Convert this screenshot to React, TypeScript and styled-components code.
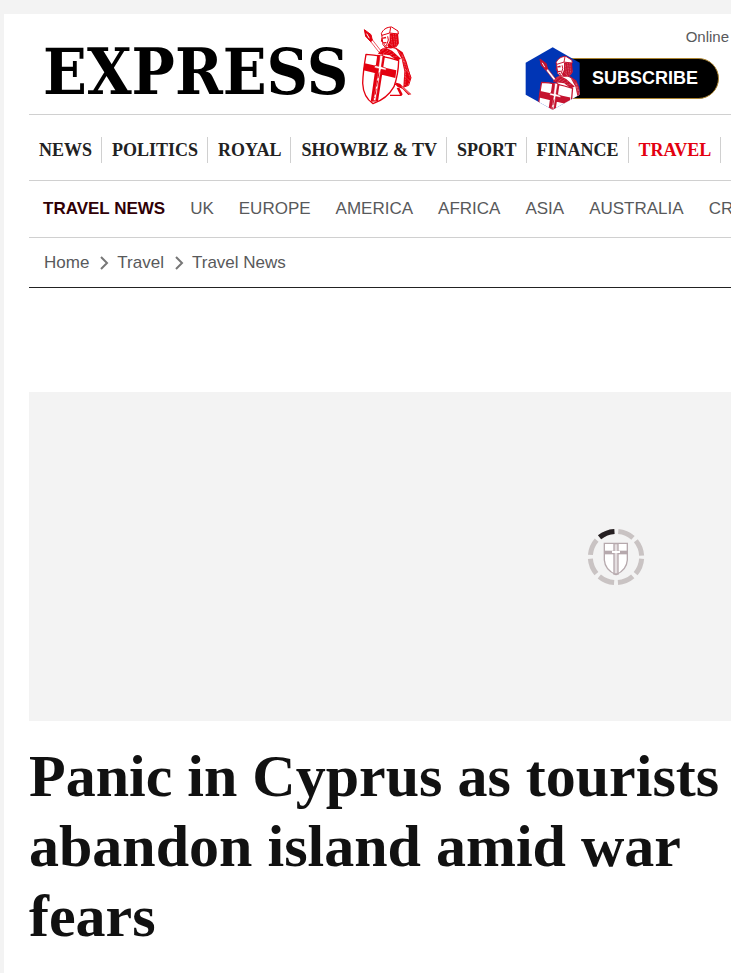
import React from "react";
import styled, { createGlobalStyle } from "styled-components";

const serif = '"Liberation Serif", "Times New Roman", serif';
const sans = '"Liberation Sans", Arial, sans-serif';

const GlobalStyle = createGlobalStyle`
  * { box-sizing: border-box; }
  body { margin: 0; background: #f3f3f3; font-family: ${sans}; }
  a { color: inherit; text-decoration: none; }
  ul, ol { list-style: none; margin: 0; padding: 0; }
`;

const Page = styled.div`
  margin: 14px 0 0 4px;
  padding-left: 25px;
  min-height: calc(100vh - 14px);
  background: #fff;
  overflow: hidden;
`;

const Masthead = styled.header`
  display: flex;
  justify-content: space-between;
  height: 101px;
  border-bottom: 1px solid #d0d0d0;
`;

const Brand = styled.a`
  display: flex;
  align-items: flex-start;
  gap: 14px;
  padding: 11px 0 0 14px;
`;

const Wordmark = styled.span`
  padding-top: 9px;
  color: #000;
  font: bold 64px/76px "DejaVu Serif Condensed", "DejaVu Serif", ${serif};
`;

const Actions = styled.div`
  display: flex;
  flex-direction: column;
  align-items: flex-end;
`;

const EditionLink = styled.a`
  padding: 14px 2px 0 0;
  color: #58595b;
  font-size: 15px;
  line-height: 18px;
`;

const SubscribeLink = styled.a`
  display: flex;
  align-items: center;
  margin-right: 12px;
`;

const BadgeDrawing = styled.svg`
  z-index: 1;
  width: 56px;
  height: 64px;
`;

const Pill = styled.span`
  display: flex;
  align-items: center;
  height: 41px;
  margin-left: -30px;
  padding: 0 20px 0 40px;
  border: 1px solid #ab8431;
  border-radius: 0 21px 21px 0;
  background: #000;
  color: #fff;
  font: bold 18px/24px ${sans};
`;

const MainNav = styled.ul`
  display: flex;
  align-items: center;
  height: 66px;
  padding-top: 4px;
  border-bottom: 1px solid #d0d0d0;
`;

const MainNavItem = styled.li<{ $active?: boolean }>`
  padding: 0 9px 0 10px;
  border-right: 1px solid #d0d0d0;
  color: ${(p) => (p.$active ? "#e3000f" : "#222")};
  font: bold 18px/26px ${serif};
  white-space: nowrap;
`;

const SubNav = styled.ul`
  display: flex;
  align-items: center;
  gap: 25px;
  height: 57px;
  padding-left: 14px;
  border-bottom: 1px solid #d0d0d0;
  overflow: hidden;
`;

const SubNavItem = styled.li<{ $active?: boolean }>`
  color: ${(p) => (p.$active ? "#300006" : "#58595b")};
  font-size: 17px;
  font-weight: ${(p) => (p.$active ? "bold" : "normal")};
  line-height: 20px;
  white-space: nowrap;
`;

const Breadcrumbs = styled.ol`
  display: flex;
  align-items: center;
  height: 50px;
  padding-left: 15px;
  border-bottom: 1px solid #222;
`;

const Crumb = styled.li`
  display: flex;
  align-items: center;
  color: #58595b;
  font-size: 17px;
  line-height: 20px;
`;

const Chevron = styled.svg`
  width: 9px;
  height: 14px;
  margin: 0 8px 0 11px;
`;

const VideoSlot = styled.div`
  display: flex;
  align-items: center;
  justify-content: flex-end;
  height: 329px;
  margin-top: 104px;
  padding-right: 86px;
  background: #f3f3f3;
`;

const Headline = styled.h1`
  margin: 20px 0 0;
  color: #111;
  font: bold 60px/70px ${serif};
`;

function CrusaderFigure({ color }: { color: string }) {
  return (
    <g stroke={color} strokeLinejoin="round" fill="#fff" strokeWidth="3">
      <path d="M56 72 88 113 94 109 62 68Z" strokeWidth="2" />
      <path d="M43 44 47 64 62 80 67 76 63 59Z" fill={color} />
      <path d="M50 56 58 70" stroke="#fff" strokeWidth="3" />
      <path d="M92 105C114 90 145 94 160 126L183 188 176 211 154 219 126 202Z" />
      <path d="M136 97 158 112 170 141 183 188 174 211 160 217 163 169 155 132Z" fill={color} stroke="none" />
      <path d="M141 104 156 122 167 166 165 212M157 119 171 160 180 188M163 183 179 198M161 160 177 173M154 131 166 144" fill="none" stroke="#fff" strokeWidth="1" strokeDasharray="3 2" />
      <path d="M95 58 99 89 106 97 123 99 139 95 145 85 142 49 123 37 106 41Z" />
      <path d="M119 56 136 53 144 55 145 88 133 98 117 99 112 92 119 78Z" fill={color} stroke="none" />
      <path d="M123 62 127 93M130 58 135 94M137 57 140 89M118 84 130 97" fill="none" stroke="#fff" strokeWidth="1" strokeDasharray="3 2" />
      <path d="M94 56C99 43 111 36 125 36L144 48 145 57 119 54 96 61ZM122 37 119 54" />
      <path d="M97 68 107 65 109 70 99 71ZM98 82 110 81 108 85 101 86Z" fill={color} stroke="none" />
      <path d="M96 69 94 79 99 80M103 88 110 97M113 64 115 75 109 92" fill="none" />
      <path d="M84 117 92 104 109 99 126 107 153 131 141 137 119 121Z" fill={color} stroke="none" />
      <path d="M91 111 104 102M99 116 116 104M109 118 123 108M119 121 132 115M129 126 142 123" fill="none" stroke="#fff" strokeWidth="1" strokeDasharray="3 2" />
      <path d="M134 202 150 206 184 238 175 240 155 219 143 216ZM148 218 158 238 154 243 120 243 120 239 150 239 140 219Z" fill={color} stroke="none" />
      <path d="M155 214 179 237" stroke="#fff" strokeWidth="2" />
      <path d="M48 118Q94 120 146 137Q145 178 132 215Q111 252 69 266Q40 247 38 205Q39 170 48 118Z" strokeWidth="4" />
      <path d="M44 145 139 166 136 189 40 166ZM82 119 105 123 84 259 62 260Z" fill={color} stroke="none" />
      <path d="M90 120 99 122 94 155 109 160 108 166 93 163 77 258 70 256 86 161 73 158 75 151 86 154Z" strokeWidth="2" />
      <path d="M87 172 74 248" strokeWidth="3" strokeDasharray="18 7" />
    </g>
  );
}

function SubscribeBadge() {
  return (
    <BadgeDrawing viewBox="16 16 168 192" aria-hidden="true">
      <defs>
        <clipPath id="hexagon">
          <path d="M99 20 180 66V162L99 207 18 162V66Z" />
        </clipPath>
      </defs>
      <path d="M99 20 180 66V162L99 207 18 162V66Z" fill="#0035b5" />
      <g clipPath="url(#hexagon)">
        <g transform="translate(20 13) scale(.95)">
          <CrusaderFigure color="#c5132f" />
        </g>
      </g>
    </BadgeDrawing>
  );
}

function Spinner() {
  return (
    <svg width="58" height="58" viewBox="0 0 174 174" role="img" aria-label="Loading">
      <g fill="none" strokeWidth="15">
        <circle cx="87" cy="87" r="77" stroke="#c9c3c3" pathLength="360" strokeDasharray="36 9" strokeDashoffset="-4" />
        <circle cx="87" cy="87" r="77" stroke="#262022" pathLength="360" strokeDasharray="36 324" strokeDashoffset="-229" />
      </g>
      <path d="M52 46H121V96Q119 126 87 140Q54 126 52 96Z" fill="#fff" stroke="#b6a9ad" strokeWidth="4" />
      <path d="M53 68H120V79H53Z" fill="#b6a9ad" />
      <path d="M81 47H93V138H81Z" fill="#e5dfe1" stroke="#b6a9ad" strokeWidth="4" />
      <path d="M75 69H99V75H75Z" fill="#fff" />
    </svg>
  );
}

const sections = ["NEWS", "POLITICS", "ROYAL", "SHOWBIZ & TV", "SPORT", "FINANCE", "TRAVEL"];
const topics = ["TRAVEL NEWS", "UK", "EUROPE", "AMERICA", "AFRICA", "ASIA", "AUSTRALIA", "CRUISE"];
const trail = ["Home", "Travel", "Travel News"];

export default function App() {
  return (
    <>
      <GlobalStyle />
      <Page>
        <Masthead>
          <Brand href="#">
            <Wordmark>EXPRESS</Wordmark>
            <svg width="50" height="80" viewBox="36 30 150 240" aria-hidden="true">
              <CrusaderFigure color="#e3000f" />
            </svg>
          </Brand>
          <Actions>
            <EditionLink href="#">Online</EditionLink>
            <SubscribeLink href="#">
              <SubscribeBadge />
              <Pill>SUBSCRIBE</Pill>
            </SubscribeLink>
          </Actions>
        </Masthead>
        <nav aria-label="Sections">
          <MainNav>
            {sections.map((name) => (
              <MainNavItem key={name} $active={name === "TRAVEL"}>
                <a href="#">{name}</a>
              </MainNavItem>
            ))}
          </MainNav>
        </nav>
        <nav aria-label="Travel">
          <SubNav>
            {topics.map((name) => (
              <SubNavItem key={name} $active={name === "TRAVEL NEWS"}>
                <a href="#">{name}</a>
              </SubNavItem>
            ))}
          </SubNav>
        </nav>
        <nav aria-label="Breadcrumb">
          <Breadcrumbs>
            {trail.map((name, i) => (
              <Crumb key={name}>
                {i > 0 && (
                  <Chevron viewBox="0 0 9 14" aria-hidden="true">
                    <path d="M1 1 7 7 1 13" fill="none" stroke="#777" strokeWidth="2" />
                  </Chevron>
                )}
                <a href="#">{name}</a>
              </Crumb>
            ))}
          </Breadcrumbs>
        </nav>
        <main>
          <VideoSlot>
            <Spinner />
          </VideoSlot>
          <Headline>Panic in Cyprus as tourists abandon island amid war fears</Headline>
        </main>
      </Page>
    </>
  );
}
